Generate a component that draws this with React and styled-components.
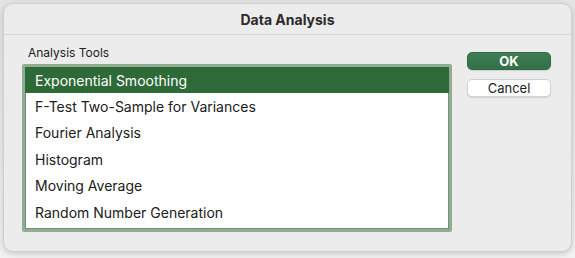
import React, {useState} from "react";
import styled, {createGlobalStyle} from "styled-components";

const Global = createGlobalStyle`
  html, body {
    margin: 0;
    padding: 0;
    background: #f1f1f1;
    font-family: Inter, "Noto Sans", sans-serif;
    -webkit-font-smoothing: antialiased;
  }
`;

const Backdrop = styled.div`
  width: 575px;
  height: 258px;
  box-sizing: border-box;
  padding: 3px 3px 6px 3px;
  background: linear-gradient(#e4e4e4, #f3f3f3);
`;

const Dialog = styled.div`
  width: 569px;
  height: 249px;
  box-sizing: border-box;
  background: #ececec;
  border: 1px solid #cfcfcf;
  border-radius: 10px;
  box-shadow: 0 2px 6px rgba(0, 0, 0, 0.18);
  display: flex;
  flex-direction: column;
  overflow: hidden;
`;

const TitleBar = styled.header`
  height: 30px;
  border-bottom: 1px solid #d4d4d4;
  display: flex;
  align-items: center;
  justify-content: center;
  font-size: 14px;
  font-weight: 700;
  color: #2b2b2b;
`;

const Body = styled.section`
  display: flex;
  padding: 10px 0 0 18px;
`;

const ToolsColumn = styled.div`
  display: flex;
  flex-direction: column;
`;

const Label = styled.span`
  font-size: 12px;
  line-height: 15px;
  color: #222;
  padding-left: 6px;
  margin-bottom: 4px;
`;

const ListBox = styled.ul`
  list-style: none;
  margin: 0;
  padding: 0;
  width: 430px;
  height: 168px;
  box-sizing: border-box;
  background: #fff;
  border: 3px solid #90ac92;
  box-shadow: inset 0 0 0 1px #6f9472;
  border-radius: 2px;
  overflow: hidden;
`;

const Item = styled.li`
  height: 26.4px;
  display: flex;
  align-items: center;
  padding-left: 10px;
  font-size: 14px;
  color: ${(p) => (p.selected ? "#fff" : "#202020")};
  background: ${(p) => (p.selected ? "#2e6a38" : "transparent")};
  cursor: default;
`;

const Buttons = styled.div`
  display: flex;
  flex-direction: column;
  gap: 9px;
  margin-left: 15px;
  padding-top: 7px;
`;

const Button = styled.button`
  width: 84px;
  height: 18px;
  padding: 0;
  border-radius: 5px;
  font-family: inherit;
  font-size: 13px;
  line-height: 16px;
  font-weight: ${(p) => (p.primary ? 700 : 400)};
  color: ${(p) => (p.primary ? "#fff" : "#1e1e1e")};
  background: ${(p) => (p.primary ? "linear-gradient(#3f7d51, #34704a)" : "#fff")};
  border: 1px solid ${(p) => (p.primary ? "#2f6943" : "#d2d2d2")};
  box-shadow: 0 1px 1px rgba(0, 0, 0, 0.12);
`;

const tools = [
  "Exponential Smoothing",
  "F-Test Two-Sample for Variances",
  "Fourier Analysis",
  "Histogram",
  "Moving Average",
  "Random Number Generation",
];

export default function App() {
  const [selected, setSelected] = useState(0);
  return (
    <>
      <Global />
      <Backdrop>
        <Dialog>
          <TitleBar>Data Analysis</TitleBar>
          <Body>
            <ToolsColumn>
              <Label>Analysis Tools</Label>
              <ListBox>
                {tools.map((t, i) => (
                  <Item key={t} selected={i === selected} onClick={() => setSelected(i)}>
                    {t}
                  </Item>
                ))}
              </ListBox>
            </ToolsColumn>
            <Buttons>
              <Button primary>OK</Button>
              <Button>Cancel</Button>
            </Buttons>
          </Body>
        </Dialog>
      </Backdrop>
    </>
  );
}
